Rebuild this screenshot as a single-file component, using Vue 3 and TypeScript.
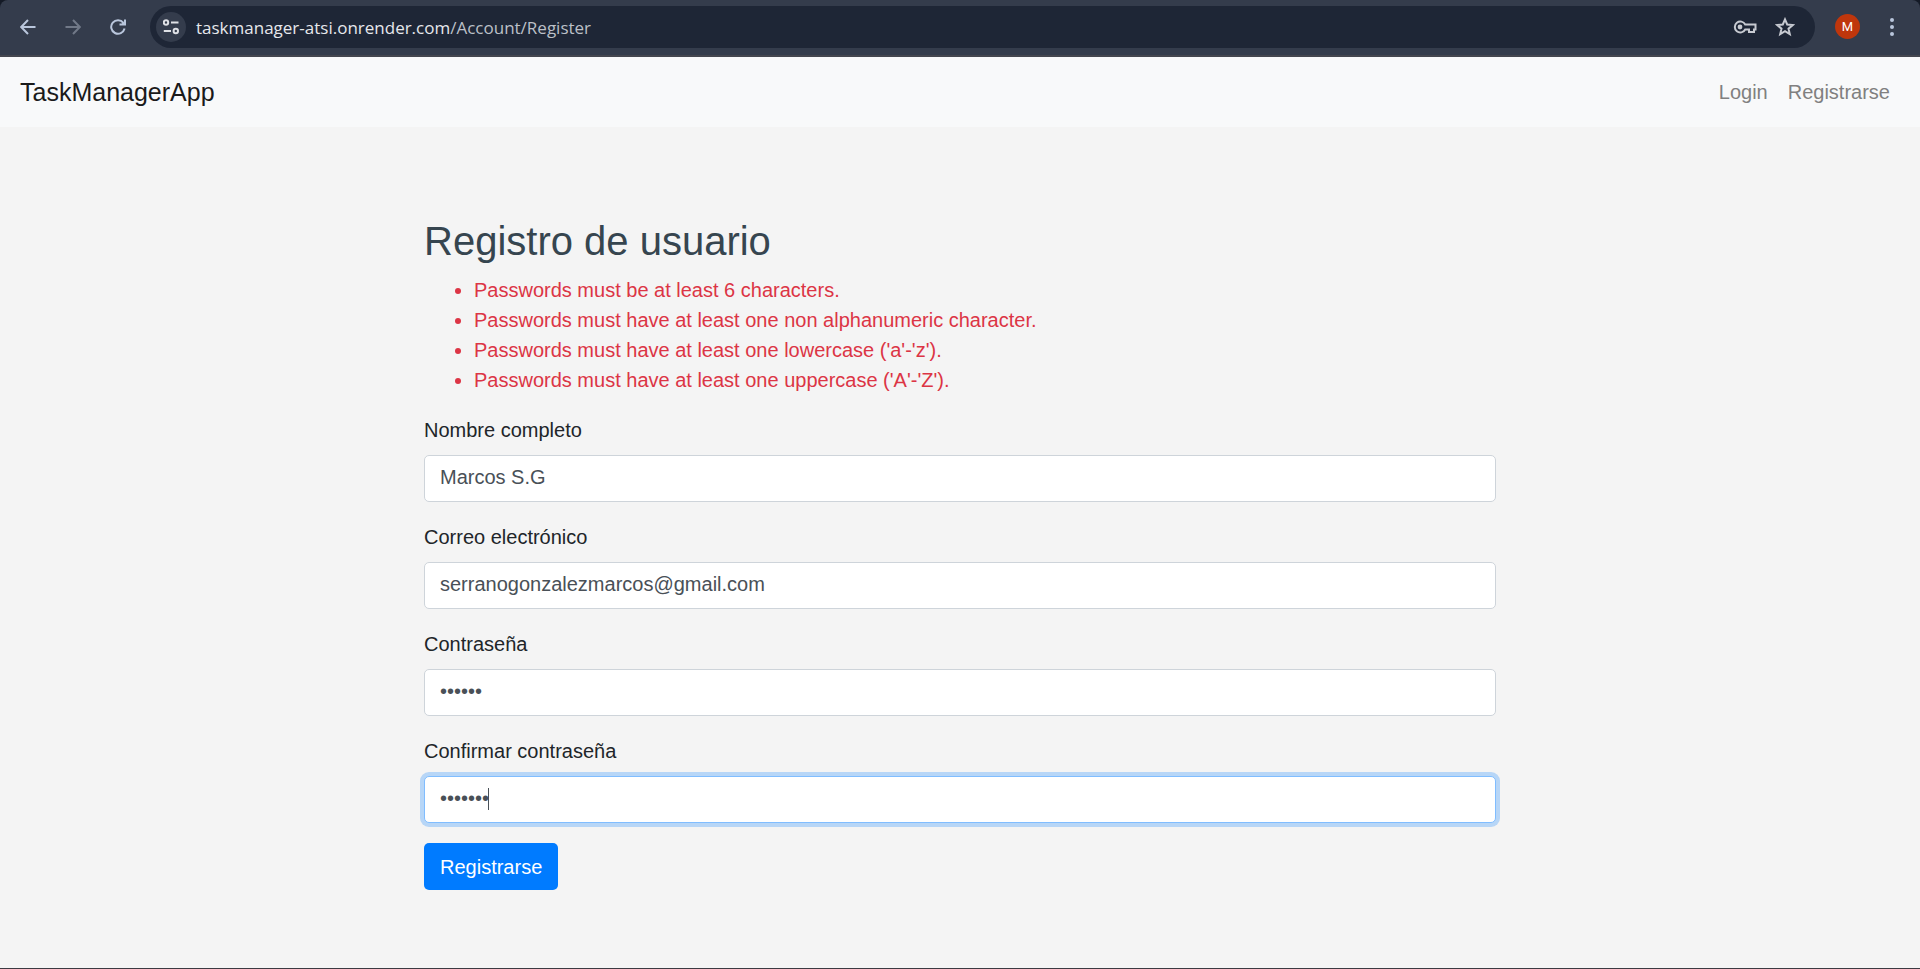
<script setup lang="ts">
import { onMounted, ref } from 'vue'

interface Field {
  id: string
  label: string
  type: string
  value: string
}

const errors: string[] = [
  'Passwords must be at least 6 characters.',
  'Passwords must have at least one non alphanumeric character.',
  "Passwords must have at least one lowercase ('a'-'z').",
  "Passwords must have at least one uppercase ('A'-'Z').",
]

const fields = ref<Field[]>([
  { id: 'nombre', label: 'Nombre completo', type: 'text', value: 'Marcos S.G' },
  { id: 'correo', label: 'Correo electrónico', type: 'email', value: 'serranogonzalezmarcos@gmail.com' },
  { id: 'clave', label: 'Contraseña', type: 'password', value: 'abc123' },
  { id: 'confirmar', label: 'Confirmar contraseña', type: 'password', value: 'abc1234' },
])

// Each password dot is 7px wide and the text starts 15px into the box.
const caretLeft = (value: string): string => `${15 + value.length * 7}px`

onMounted(() => {
  document.getElementById('confirmar')?.focus()
})
</script>

<template>
  <div class="window">
    <header class="toolbar">
      <div class="nav-buttons">
        <button type="button" class="tool" aria-label="Atrás">
          <svg width="16" height="16" viewBox="0 0 16 16"><path d="M15.5 8H1.5M8 1L1.2 8L8 15" /></svg>
        </button>
        <button type="button" class="tool dim" aria-label="Adelante">
          <svg width="16" height="16" viewBox="0 0 16 16"><path d="M0.5 8H14.5M8 1L14.8 8L8 15" /></svg>
        </button>
        <button type="button" class="tool" aria-label="Recargar">
          <svg width="16" height="16" viewBox="0 0 16 16"><path d="M13.4 3.8A6.8 6.8 0 1 0 14.6 9.6M15 0.5V5.6H9.5" /><path class="solid" d="M15.5 1V6H10.5Z" /></svg>
        </button>
      </div>
      <div class="omnibox">
        <button type="button" class="site" aria-label="Información del sitio">
          <svg width="16" height="16" viewBox="0 0 16 16"><circle cx="3" cy="3.5" r="2.2" /><path d="M8 3.5H15.5M0.8 12H8" /><circle cx="12.8" cy="12" r="2.2" /></svg>
        </button>
        <span class="url">taskmanager-atsi.onrender.com<span class="path">/Account/Register</span></span>
        <button type="button" class="tool inner" aria-label="Contraseñas">
          <svg width="24" height="16" viewBox="0 0 24 16"><path d="M12.2 5.5A5.5 5.5 0 1 0 12.2 10.5H16V13H21V10.5H22.5V5.5Z" /><circle class="solid" cx="7" cy="8" r="2.4" /></svg>
        </button>
        <button type="button" class="tool inner" aria-label="Marcador">
          <svg width="20" height="20" viewBox="0 0 20 20"><path d="M10 2.4L12.2 7.5L17.8 8L13.5 11.7L14.8 17.2L10 14.2L5.2 17.2L6.5 11.7L2.2 8L7.8 7.5Z" /></svg>
        </button>
      </div>
      <button type="button" class="avatar" aria-label="Perfil">M</button>
      <button type="button" class="tool menu" aria-label="Menú">
        <svg width="4" height="18" viewBox="0 0 4 18"><circle class="solid" cx="2" cy="2" r="2" /><circle class="solid" cx="2" cy="9" r="2" /><circle class="solid" cx="2" cy="16" r="2" /></svg>
      </button>
    </header>

    <nav class="navbar">
      <a class="brand" href="#">TaskManagerApp</a>
      <div class="links">
        <a href="#">Login</a>
        <a href="#">Registrarse</a>
      </div>
    </nav>

    <main class="container">
      <h2>Registro de usuario</h2>
      <form @submit.prevent>
        <ul class="errors">
          <li v-for="error in errors" :key="error">{{ error }}</li>
        </ul>
        <div v-for="field in fields" :key="field.id" class="group">
          <label :for="field.id">{{ field.label }}</label>
          <div class="control">
            <input :id="field.id" v-model="field.value" :type="field.type" autocomplete="off" />
            <span v-if="field.id === 'confirmar'" class="caret" :style="{ left: caretLeft(field.value) }"></span>
          </div>
        </div>
        <button type="submit" class="submit">Registrarse</button>
      </form>
    </main>
  </div>
</template>

<style>
body {
  margin: 0;
  background: #f4f4f4;
}
</style>

<style scoped>
* {
  box-sizing: border-box;
}

.window {
  display: flex;
  flex-direction: column;
  min-height: 100vh;
  border-bottom: 1px solid #3c3a42;
  background: #f4f4f4;
  color: #212529;
  font: 20px/30px "Liberation Sans", Arial, sans-serif;
}

button {
  padding: 0;
  border: 0;
  background: none;
  font-family: inherit;
}

.toolbar {
  display: flex;
  align-items: center;
  height: 57px;
  padding: 0 16px 2px 20px;
  border-bottom: 2px solid #44464f;
  border-radius: 8px 8px 0 0;
  background: #343c4c;
  box-shadow: 0 -8px 0 8px #141a26;
  clip-path: inset(0);
}

.nav-buttons {
  display: flex;
  gap: 29px;
  margin-right: 24px;
}

.tool {
  display: flex;
  color: #b9c6dc;
}

.tool.dim {
  color: #717988;
}

.tool.inner {
  color: #c7cad1;
}

svg {
  display: block;
  fill: none;
  stroke: currentColor;
  stroke-width: 2;
}

.solid {
  fill: currentColor;
  stroke: none;
}

.omnibox {
  display: flex;
  flex: 1;
  align-items: center;
  gap: 18px;
  height: 42px;
  padding: 0 20px 0 6px;
  border-radius: 21px;
  background: #1e2636;
}

.site {
  display: grid;
  place-items: center;
  width: 30px;
  height: 30px;
  margin-right: -8px;
  border-radius: 50%;
  background: #343c4c;
  color: #dfe1e6;
}

.url {
  flex: 1;
  padding-top: 2px;
  color: #e6e8ec;
  font: 17px/24px "Open Sans", "Noto Sans", sans-serif;
}

.path {
  color: #bcc0c8;
}

.avatar {
  width: 25px;
  height: 25px;
  margin: 0 20px;
  border-radius: 50%;
  background: #bf360c;
  color: #fff;
  font: 13px/26px Roboto, sans-serif;
}

.menu {
  width: 24px;
  justify-content: center;
}

.navbar {
  display: flex;
  align-items: center;
  justify-content: space-between;
  height: 70px;
  padding: 0 30px 1px 20px;
  background: #f8f9fa;
}

.navbar a {
  text-decoration: none;
}

.brand {
  color: #1a1a1a;
  font-size: 25px;
}

.links {
  display: flex;
  gap: 20px;
}

.links a {
  color: #808080;
}

.container {
  width: 100%;
  max-width: 1112px;
  margin: 0 auto;
  padding: 90px 20px 40px;
}

h2 {
  margin: 0 0 10px;
  color: #36454f;
  font-weight: 400;
  font-size: 40px;
  line-height: 48px;
}

.errors {
  margin: 0 0 20px;
  padding-left: 50px;
  color: #dc3545;
}

.group {
  display: flex;
  flex-direction: column;
  gap: 10px;
  margin-bottom: 20px;
}

.control {
  display: flex;
  position: relative;
}

.control input {
  width: 100%;
  height: 47px;
  padding: 0 15px 2px;
  border: 1px solid #ced4da;
  border-radius: 5px;
  outline: 0;
  background: #fff;
  color: #495057;
  font: inherit;
}

.control input:focus {
  border-color: #80bdff;
  box-shadow: 0 0 0 4px rgba(0, 123, 255, 0.25);
  caret-color: transparent;
}

.caret {
  position: absolute;
  top: 12px;
  width: 1px;
  height: 22px;
  background: #495057;
}

.submit {
  height: 47px;
  padding: 0 16px;
  border-radius: 5px;
  background: #007bff;
  color: #fff;
  font-size: 20px;
  line-height: 30px;
}
</style>
